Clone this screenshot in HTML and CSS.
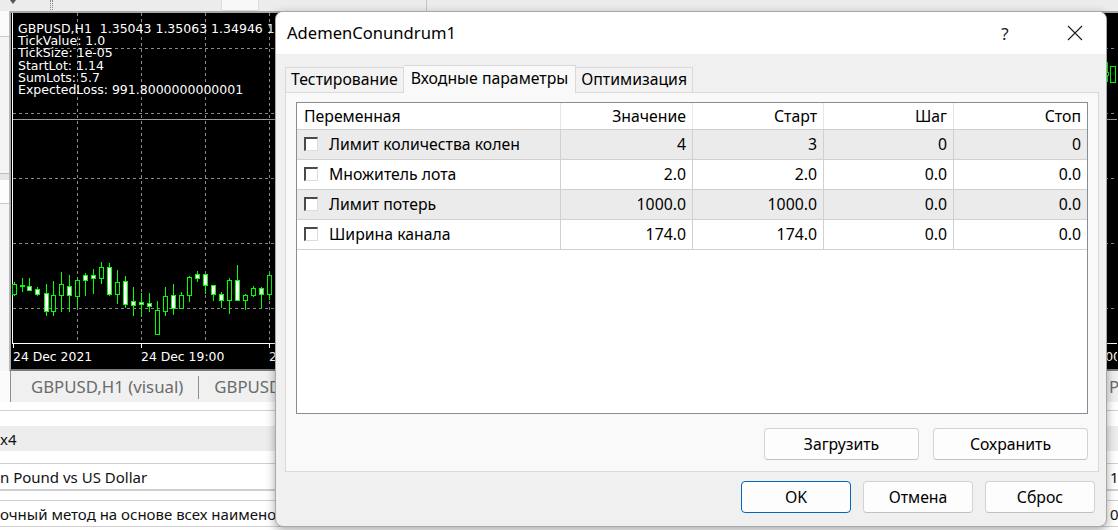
FILE: index.html
```html
<!doctype html>
<html>
<head>
	<meta charset="utf-8">
	<title>AdemenConundrum1</title>
	<link rel="stylesheet" href="styles.css">
</head>
<body>
	<div class="app">
		<div class="toolbar">
			<span class="tb-arrow"></span>
			<span class="tb-grip"></span>
			<span class="tb-box"></span>
			<span class="tb-sep"></span>
		</div>
		<div class="workspace">
			<div class="navpane">
				<div class="nav-a"></div>
				<div class="nav-b"></div>
				<div class="nav-c"></div>
				<div class="nav-d"></div>
				<div class="nav-e"></div>
			</div>
			<div class="chart">
				<svg class="chart-svg" width="1106" height="356" viewBox="12 14 1106 356">
					<g stroke="#8a8a8a" stroke-dasharray="3 3" stroke-width="1">
						<line x1="14" y1="49.5" x2="1118" y2="49.5"/>
						<line x1="14" y1="114.5" x2="1118" y2="114.5"/>
						<line x1="14" y1="179.5" x2="1118" y2="179.5"/>
						<line x1="14" y1="244.5" x2="1118" y2="244.5"/>
						<line x1="14" y1="309.5" x2="1118" y2="309.5"/>
						<line x1="78.5" y1="14" x2="78.5" y2="344"/>
						<line x1="142.5" y1="14" x2="142.5" y2="344"/>
						<line x1="206.5" y1="14" x2="206.5" y2="344"/>
						<line x1="270.5" y1="14" x2="270.5" y2="344"/>
					</g>
					<line x1="14" y1="120.5" x2="1118" y2="120.5" stroke="#9a9a9a"/>
					<g stroke="#ffffff">
						<line x1="13.5" y1="14" x2="13.5" y2="345"/>
						<line x1="13" y1="344.5" x2="1118" y2="344.5"/>
						<line x1="14.5" y1="344" x2="14.5" y2="349"/>
						<line x1="142.5" y1="344" x2="142.5" y2="349"/>
						<line x1="270.5" y1="344" x2="270.5" y2="349"/>
					</g>
					<g class="candles" stroke="#00ff00" stroke-width="1">
						<path d="M15.5 283V297M23.5 279V293M30.5 279V292M38.5 288V297M47.5 285V317M54.5 282V317M62.5 273V313M70.5 276V313M78.5 280V308M86.5 274V297M94.5 270V295M102.5 263V285M110.5 264V297M118.5 271V305M126.5 277V309M134.5 288V317M142.5 294V318M150.5 294V313M158.5 302V335M166.5 288V317M174.5 285V316M182.5 293V310M190.5 277V303M198.5 272V283M206.5 275V295M214.5 286V302M222.5 293V309M230.5 279V315M238.5 266V301M246.5 295V311M254.5 287V298M262.5 288V309M270.5 274V301M1108.5 63V83"/>
						<rect x="13.5" y="285.5" width="4" height="10" fill="#000"/>
						<rect x="21.5" y="286.5" width="4" height="1" fill="#000"/>
						<rect x="28.5" y="287.5" width="4" height="4" fill="#fff"/>
						<rect x="36.5" y="290.5" width="4" height="5" fill="#fff"/>
						<rect x="45.5" y="294.5" width="4" height="18" fill="#fff"/>
						<rect x="52.5" y="296.5" width="4" height="16" fill="#000"/>
						<rect x="60.5" y="285.5" width="4" height="11" fill="#000"/>
						<rect x="68.5" y="287.5" width="4" height="9" fill="#fff"/>
						<rect x="76.5" y="281.5" width="4" height="16" fill="#000"/>
						<rect x="84.5" y="276.5" width="4" height="5" fill="#fff"/>
						<rect x="92.5" y="276.5" width="4" height="3" fill="#fff"/>
						<rect x="100.5" y="268.5" width="4" height="11" fill="#000"/>
						<rect x="108.5" y="268.5" width="4" height="27" fill="#fff"/>
						<rect x="116.5" y="283.5" width="4" height="12" fill="#000"/>
						<rect x="124.5" y="282.5" width="4" height="23" fill="#fff"/>
						<rect x="132.5" y="302.5" width="4" height="4" fill="#fff"/>
						<rect x="140.5" y="303.5" width="4" height="2" fill="#fff"/>
						<rect x="148.5" y="304.5" width="4" height="3" fill="#fff"/>
						<rect x="156.5" y="311.5" width="4" height="24" fill="#000"/>
						<rect x="164.5" y="297.5" width="4" height="15" fill="#000"/>
						<rect x="172.5" y="296.5" width="4" height="13" fill="#fff"/>
						<rect x="180.5" y="296.5" width="4" height="13" fill="#000"/>
						<rect x="188.5" y="278.5" width="4" height="18" fill="#000"/>
						<rect x="196.5" y="275.5" width="4" height="4" fill="#fff"/>
						<rect x="204.5" y="275.5" width="4" height="11" fill="#fff"/>
						<rect x="212.5" y="286.5" width="4" height="9" fill="#fff"/>
						<rect x="220.5" y="295.5" width="4" height="6" fill="#fff"/>
						<rect x="228.5" y="281.5" width="4" height="20" fill="#000"/>
						<rect x="236.5" y="281.5" width="4" height="20" fill="#fff"/>
						<rect x="244.5" y="296.5" width="4" height="5" fill="#000"/>
						<rect x="252.5" y="289.5" width="4" height="7" fill="#000"/>
						<rect x="260.5" y="289.5" width="4" height="6" fill="#e0e0e0"/>
						<rect x="268.5" y="276.5" width="4" height="19" fill="#000"/>
						<rect x="1106.5" y="73.5" width="3" height="3" fill="#000"/>
						<rect x="1111.5" y="67.5" width="5" height="16" fill="#000"/>
					</g>
					<g class="axis-labels" fill="#ffffff">
						<text x="14" y="362">24 Dec 2021</text>
						<text x="142" y="362">24 Dec 19:00</text>
						<text x="270" y="362">24 Dec 21:00</text>
						<text x="1122" y="362" text-anchor="end">25 Dec 00:00</text>
					</g>
				</svg>
				<div class="chart-info">
					<div>GBPUSD,H1&nbsp; 1.35043 1.35063 1.34946 1.35012</div>
					<div>TickValue: 1.0</div>
					<div>TickSize: 1e-05</div>
					<div>StartLot: 1.14</div>
					<div>SumLots: 5.7</div>
					<div>ExpectedLoss: 991.8000000000001</div>
				</div>
			</div>
		</div>
		<div class="doc-tabs">
			<div class="doc-lead"></div>
			<div class="doc-tab">GBPUSD,H1 (visual)</div>
			<div class="doc-tab">GBPUSD,H1</div>
			<div class="doc-tab edge">Properties</div>
		</div>
		<div class="props">
			<div class="prop-gap top"></div>
			<div class="prop-gap blank"></div>
			<div class="prop-row shaded"><span>x4</span></div>
			<div class="prop-gap line"></div>
			<div class="prop-row"><span>n Pound vs US Dollar</span><span class="prop-edge">1</span></div>
			<div class="prop-gap thin"></div>
			<div class="prop-row"><span>очный метод на основе всех наименований</span><span class="prop-edge">0</span></div>
		</div>
	</div>

	<div class="dialog">
		<div class="dlg-title">
			<span class="dlg-caption">AdemenConundrum1</span>
			<span class="dlg-help">?</span>
			<span class="dlg-close">
				<svg width="16" height="16" viewBox="0 0 16 16"><path d="M1 1L15 15M15 1L1 15" stroke="#1b1b1b" stroke-width="1.1" fill="none"/></svg>
			</span>
		</div>
		<div class="dlg-body">
			<div class="tabs">
				<div class="tab">Тестирование</div>
				<div class="tab active">Входные параметры</div>
				<div class="tab">Оптимизация</div>
			</div>
			<div class="tab-panel">
				<div class="grid">
					<div class="grid-row head">
						<div class="cell name">Переменная</div>
						<div class="cell">Значение</div>
						<div class="cell">Старт</div>
						<div class="cell">Шаг</div>
						<div class="cell">Стоп</div>
					</div>
					<div class="grid-row odd">
						<div class="cell name"><span class="check"></span>Лимит количества колен</div>
						<div class="cell">4</div>
						<div class="cell">3</div>
						<div class="cell">0</div>
						<div class="cell">0</div>
					</div>
					<div class="grid-row">
						<div class="cell name"><span class="check"></span>Множитель лота</div>
						<div class="cell">2.0</div>
						<div class="cell">2.0</div>
						<div class="cell">0.0</div>
						<div class="cell">0.0</div>
					</div>
					<div class="grid-row odd">
						<div class="cell name"><span class="check"></span>Лимит потерь</div>
						<div class="cell">1000.0</div>
						<div class="cell">1000.0</div>
						<div class="cell">0.0</div>
						<div class="cell">0.0</div>
					</div>
					<div class="grid-row">
						<div class="cell name"><span class="check"></span>Ширина канала</div>
						<div class="cell">174.0</div>
						<div class="cell">174.0</div>
						<div class="cell">0.0</div>
						<div class="cell">0.0</div>
					</div>
				</div>
				<div class="panel-buttons">
					<button class="btn wide">Загрузить</button>
					<button class="btn wide">Сохранить</button>
				</div>
			</div>
			<div class="dlg-buttons">
				<button class="btn default">OK</button>
				<button class="btn">Отмена</button>
				<button class="btn">Сброс</button>
			</div>
		</div>
	</div>
</body>
</html>
```

FILE: styles.css
```css
*{margin: 0;padding: 0;box-sizing: border-box;}
body{
	width: 1118px;height: 530px;overflow: hidden;position: relative;
	background: #f0f0f0;
	font-family: "Noto Sans", "Liberation Sans", sans-serif;
	color: #000;
}
.app{display: flex;flex-direction: column;height: 530px;}

/* top toolbar strip */
.toolbar{height: 12px;display: flex;align-items: flex-start;background: #ececec;border-bottom: 1px solid #d6d6d6;}
.tb-arrow{margin-left: 10px;width: 0;height: 0;border-left: 3px solid transparent;border-right: 3px solid transparent;border-top: 4px solid #555;}
.tb-grip{margin-left: 34px;width: 3px;height: 10px;border-left: 1px dotted #8a8a8a;border-right: 1px dotted #8a8a8a;}
.tb-box{margin-left: 168px;width: 38px;height: 11px;background: #f8f8f8;border: 1px solid #dcdcdc;border-top: none;}
.tb-sep{margin-left: 167px;width: 1px;height: 11px;background: #c4c4c4;}

/* chart area */
.workspace{display: flex;height: 360px;margin-top: -1px;}
.navpane{width: 10px;display: flex;flex-direction: column;border-right: 1px solid #b8b8b8;}
.nav-a{height: 26px;background: #fbfbfb;border-bottom: 1px solid #c9c9c9;}
.nav-b{height: 137px;background: #f4f4f4;border-bottom: 1px solid #bdbdbd;}
.nav-c{height: 6px;background: #e6e6e6;}
.nav-d{height: 24px;background: #fdfdfd;border-bottom: 1px solid #c9c9c9;}
.nav-e{flex: 1;background: #f6f6f6;}
.chart{
	flex: 1;position: relative;overflow: hidden;background: #000;
	border-top: 2px solid #a8a8a8;border-left: 1px solid #a8a8a8;border-bottom: 2px solid #7a7a7a;
}
.chart-svg{display: block;}
.axis-labels text{font-family: "DejaVu Sans", sans-serif;font-size: 12.4px;}
.chart-info{
	position: absolute;left: 7px;top: 10px;
	color: #fff;font-family: "DejaVu Sans", sans-serif;font-size: 12.5px;line-height: 12.2px;
	white-space: nowrap;
}

/* document tabs */
.doc-tabs{height: 31px;display: flex;align-items: stretch;background: #f0f0f0;overflow: hidden;}
.doc-lead{width: 11px;background: #fbfbfb;border-right: 1px solid #8e8e8e;}
.doc-tab{
	display: flex;align-items: center;padding: 0 16px 0 20px;
	font-size: 16.8px;color: #6b6b6b;white-space: nowrap;
	position: relative;
}
.doc-tab + .doc-tab{padding-left: 15px;}
.doc-tab:after{content: '';position: absolute;right: 0;top: 5px;bottom: 3px;border-right: 1px solid #8e8e8e;}
.doc-tab.edge{margin-left: auto;width: 9px;padding: 0;overflow: hidden;}
.doc-tab.edge:after{display: none;}

/* property rows below */
.props{flex: 1;background: #fff;font-size: 15px;color: #111;}
.prop-gap.top{height: 9px;border-bottom: 1px solid #cfcfcf;}
.prop-gap.blank{height: 15px;}
.prop-gap.line{height: 13px;border-bottom: 1px solid #cfcfcf;}
.prop-gap.thin{height: 11px;border-top: 1px solid #cfcfcf;border-bottom: 1px solid #cfcfcf;}
.prop-row{display: flex;align-items: center;height: 26px;white-space: nowrap;border-bottom: 1px solid #cfcfcf;}
.prop-row.shaded{height: 25px;background: #ededed;border-bottom: none;}
.prop-edge{margin-left: auto;width: 8px;overflow: hidden;}

/* dialog window */
.dialog{
	position: absolute;left: 275px;top: 11px;width: 832px;height: 516px;
	background: #f0f0f0;border: 1px solid #a9a9a9;border-radius: 8px;overflow: hidden;
	box-shadow: 0 3px 10px rgba(0,0,0,0.35);
	display: flex;flex-direction: column;
}
.dlg-title{height: 42px;background: #fff;display: flex;align-items: center;flex-shrink: 0;}
.dlg-caption{padding-left: 11px;font-size: 16.6px;padding-bottom: 1px;}
.dlg-help{margin-left: auto;width: 30px;text-align: center;font-size: 17px;color: #222;}
.dlg-close{margin-left: 47px;margin-right: 23px;width: 16px;height: 16px;display: flex;}
.dlg-body{flex: 1;padding: 0 7px 0 9px;display: flex;flex-direction: column;}

.tabs{display: flex;align-items: flex-end;height: 27px;margin-top: 11px;font-size: 15.8px;}
.tab{
	height: 25px;padding: 0 5px;line-height: 23px;
	background: #f2f2f2;border: 1px solid #d9d9d9;border-bottom: none;white-space: nowrap;
}
.tab + .tab{border-left: none;}
.tab.active{height: 28px;margin-bottom: -1px;padding: 0 7px;line-height: 25px;background: #f9f9f9;position: relative;z-index: 1;}

.tab-panel{
	height: 380px;background: #f9f9f9;border: 1px solid #dadada;
	padding: 9px 10px 0 10px;
}
.grid{height: 312px;background: #fff;border: 1px solid #878d96;font-size: 15.8px;}
.grid-row{display: grid;grid-template-columns: 264px 132px 131px 130px 1fr;height: 30px;border-bottom: 1px solid #d0d0d0;}
.grid-row.head{height: 27px;}
.grid-row.odd{background: #ebebeb;}
.cell{
	display: flex;align-items: center;justify-content: flex-end;
	padding: 0 6px 1px 6px;border-right: 1px solid #d0d0d0;white-space: nowrap;
}
.cell:last-child{border-right: none;}
.head .cell{border-right-color: #e6e6e6;}
.cell.name{justify-content: flex-start;padding-left: 7px;}
.check{
	width: 14px;height: 14px;margin-right: 11px;background: #fff;
	border-top: 2px solid #4a4a4a;border-left: 2px solid #4a4a4a;
	border-right: 1px solid #dcdcdc;border-bottom: 1px solid #dcdcdc;
	flex-shrink: 0;
}

.panel-buttons{display: flex;justify-content: flex-end;gap: 14px;margin-top: 14px;}
.btn{
	height: 32px;width: 110px;font-family: inherit;font-size: 15.8px;color: #000;
	background: #fdfdfd;border: 1px solid #d3d3d3;border-bottom-color: #c2c2c2;border-radius: 4px;
}
.btn.wide{width: 155px;}
.btn.default{border: 1px solid #0067c0;}
.dlg-buttons{display: flex;justify-content: flex-end;gap: 12px;margin-top: 9px;padding-right: 4px;}
```
